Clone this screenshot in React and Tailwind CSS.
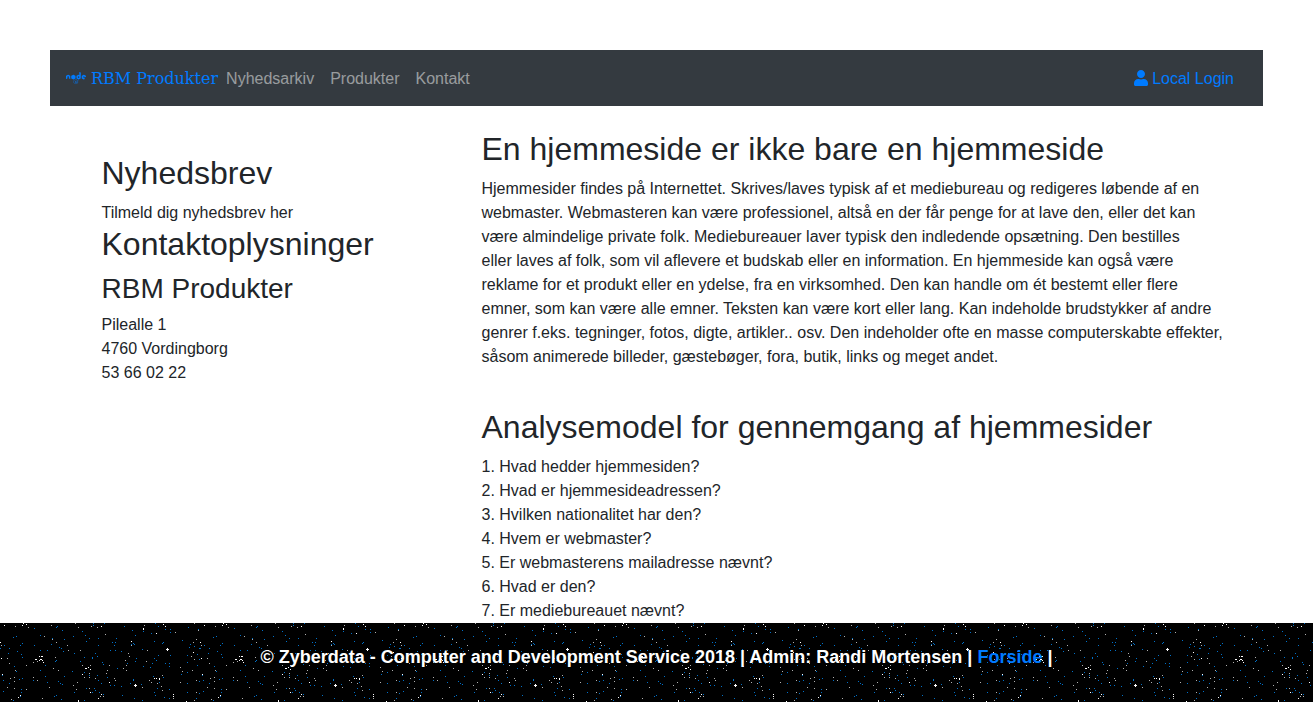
import React from "react";
import { FaNode, FaUser } from "react-icons/fa";

const questions = [
  "Hvad hedder hjemmesiden?",
  "Hvad er hjemmesideadressen?",
  "Hvilken nationalitet har den?",
  "Hvem er webmaster?",
  "Er webmasterens mailadresse nævnt?",
  "Hvad er den?",
  "Er mediebureauet nævnt?",
];

// Star positions inside one 200px wide tile of the night sky.
const white = [
  [22, 2], [23, 0], [26, 1], [4, 2], [0, 19], [1, 35], [39, 33], [41, 33], [42, 33], [35, 36], [36, 36],
  [39, 37], [40, 36], [41, 36], [42, 37], [43, 39], [2, 51], [20, 72], [18, 74], [101, 3], [131, 18],
  [85, 45], [86, 45], [88, 44], [90, 46], [82, 51], [109, 59], [90, 69], [101, 71], [98, 75], [78, 77],
  [78, 78], [143, 5], [143, 6], [156, 10], [165, 3], [163, 1], [154, 55], [156, 55], [159, 55], [159, 56],
  [193, 29], [173, 71], [173, 73], [186, 78], [166, 26],
  [167, 25], [167, 26], [167, 27], [168, 26], [134, 62], [135, 61], [135, 62], [135, 63], [136, 62],
];
const gray = [
  [15, 3], [28, 4], [44, 13], [1, 22], [7, 35], [9, 40], [15, 47], [10, 55], [14, 54], [14, 58], [7, 64],
  [14, 65], [26, 66], [11, 76], [26, 42], [33, 54], [33, 39], [37, 38], [37, 57], [51, 2], [56, 19],
  [52, 16], [67, 22], [55, 34], [53, 45], [58, 47], [49, 64], [42, 75], [68, 27], [78, 4], [97, 4],
  [75, 0], [91, 3], [105, 11], [131, 22], [80, 27], [90, 42], [82, 42], [84, 54], [89, 54], [95, 55],
  [89, 50], [109, 42], [107, 47], [106, 50], [114, 55], [115, 57], [125, 37], [128, 30],
  [123, 45], [126, 42], [73, 62], [77, 59], [76, 66], [89, 65], [100, 73], [103, 73], [126, 47],
  [129, 33], [144, 2], [175, 9], [198, 7], [196, 16], [193, 19], [194, 0], [147, 27], [146, 38],
  [180, 44], [182, 48], [192, 47], [162, 52], [149, 57], [151, 59], [157, 60], [180, 59], [161, 63],
  [162, 67], [142, 64], [196, 57], [191, 33], [194, 36], [196, 69], [194, 77], [173, 75],
];
const blue = [
  [13, 14], [16, 13], [34, 5], [22, 20], [20, 22], [0, 25], [9, 25], [4, 22], [17, 28], [21, 31],
  [22, 34], [8, 30], [14, 43], [16, 48], [2, 52], [3, 57], [9, 60], [19, 56], [22, 55], [3, 68],
  [21, 66], [21, 69], [20, 73], [13, 77], [40, 12], [57, 3], [56, 4], [62, 7], [64, 16], [52, 15],
  [34, 22], [40, 27], [47, 27], [51, 21], [59, 24], [61, 25], [63, 28], [56, 37], [55, 38], [40, 47],
  [45, 42], [45, 53], [33, 57], [64, 53], [58, 58], [60, 60], [62, 61], [47, 59], [54, 73], [56, 72],
  [61, 76], [93, 0], [93, 2], [104, 0], [82, 8], [85, 12], [73, 13], [86, 18], [89, 15], [98, 15],
  [98, 22], [116, 15], [112, 19], [115, 19], [114, 22], [110, 27], [115, 27], [124, 3], [132, 7],
  [135, 12], [133, 20], [131, 21], [134, 21], [121, 28], [74, 30], [84, 34], [92, 34], [92, 35],
  [95, 30], [97, 33], [80, 38], [102, 39], [103, 41], [72, 48], [89, 52], [84, 49], [97, 52], [98, 57],
  [101, 60], [107, 54], [110, 62], [114, 62], [121, 63], [133, 56], [133, 57], [130, 60], [86, 65],
  [74, 69], [94, 65], [95, 67], [92, 69], [99, 69], [103, 71], [122, 72], [134, 75], [84, 77],
  [135, 38], [136, 35], [127, 40], [117, 45], [155, 0], [143, 8], [158, 3], [165, 6], [170, 6],
  [170, 9], [151, 10], [154, 18], [163, 19], [162, 20], [182, 17], [189, 24], [190, 21], [170, 32],
  [142, 26], [158, 32], [154, 35], [156, 37], [152, 40], [143, 43], [150, 44], [165, 40], [169, 40],
  [169, 43], [153, 53], [163, 54], [159, 59], [181, 51], [187, 49], [157, 65], [154, 69], [155, 72],
  [164, 74], [169, 75], [142, 77], [187, 32], [187, 39], [197, 42], [199, 36], [198, 6],
  [188, 4], [187, 60], [187, 69], [199, 58], [199, 70],
  [169, 66], [141, 61], [194, 23], [199, 25], [197, 31], [196, 75],
];

const dots = (points) => points.map(([x, y]) => `M${x} ${y}h1v1h-1z`).join("");

function Stars() {
  return (
    <svg className="absolute inset-0 h-full w-full" shapeRendering="crispEdges" aria-hidden="true">
      <defs>
        <pattern id="sky" width="200" height="200" patternUnits="userSpaceOnUse">
          <path d="M0 0h200v200H0z" fill="#000" />
          <path d={dots(blue)} fill="#0070c8" />
          <path d={dots(gray)} fill="#b0b0b0" />
          <path d={dots(white)} fill="#fff" />
        </pattern>
      </defs>
      <rect width="100%" height="100%" fill="url(#sky)" />
    </svg>
  );
}

function Heading({ children }) {
  return <h2 className="mb-2 text-[32px] leading-[39px]">{children}</h2>;
}

export default function App() {
  return (
    <div className="font-[Arial,'Liberation_Sans',sans-serif] text-base text-[#212529]">
      <div className="px-[50px] pt-[50px]">
        <nav className="flex h-14 items-center bg-[#343a40] pr-[29px] pl-4">
          <a href="#" className="flex items-center gap-[5px] pr-2 font-['DejaVu_Serif',serif] text-[#007bff]">
            <FaNode className="h-4 w-5" aria-hidden="true" />
            <span className="pt-0.5">RBM Produkter</span>
          </a>
          <div className="flex flex-1 gap-4 pt-0.5 text-white/50">
            <a href="#nyhedsarkiv">Nyhedsarkiv</a>
            <a href="#produkter">Produkter</a>
            <a href="#kontakt">Kontakt</a>
          </div>
          <a href="#login" className="flex items-center gap-1 text-[#007bff]">
            <FaUser className="h-4 w-3.5" aria-hidden="true" />
            <span className="pt-0.5">Local Login</span>
          </a>
        </nav>
      </div>

      <main className="mx-auto flex max-w-[1140px] pt-6 pb-16">
        <aside className="w-1/3 px-[15px] pt-6">
          <Heading>Nyhedsbrev</Heading>
          <p>Tilmeld dig nyhedsbrev her</p>
          <Heading>Kontaktoplysninger</Heading>
          <h3 className="mb-2 text-[28px] leading-[33px]">RBM Produkter</h3>
          <address className="not-italic">
            Pilealle 1<br />
            4760 Vordingborg<br />
            53 66 02 22
          </address>
        </aside>
        <article className="w-2/3 px-[15px]">
          <Heading>En hjemmeside er ikke bare en hjemmeside</Heading>
          <p className="mb-[39px]">
            Hjemmesider findes på Internettet. Skrives/laves typisk af et mediebureau og redigeres løbende af en
            webmaster. Webmasteren kan være professionel, altså en der får penge for at lave den, eller det kan
            være almindelige private folk. Mediebureauer laver typisk den indledende opsætning. Den bestilles
            eller laves af folk, som vil aflevere et budskab eller en information. En hjemmeside kan også være
            reklame for et produkt eller en ydelse, fra en virksomhed. Den kan handle om ét bestemt eller flere
            emner, som kan være alle emner. Teksten kan være kort eller lang. Kan indeholde brudstykker af andre{" "}
            <span className="md:whitespace-nowrap">
              genrer f.eks. tegninger, fotos, digte, artikler.. osv. Den indeholder ofte en masse computerskabte
              effekter,
            </span>{" "}
            såsom animerede billeder, gæstebøger, fora, butik, links og meget andet.
          </p>
          <Heading>Analysemodel for gennemgang af hjemmesider</Heading>
          <ol>
            {questions.map((question, i) => (
              <li key={question}>
                {i + 1}. {question}
              </li>
            ))}
          </ol>
        </article>
      </main>

      <footer className="fixed inset-x-0 bottom-0 bg-black pt-[21px] pb-[31px] text-center text-lg leading-[27px] font-bold text-white">
        <Stars />
        <p className="relative">
          © Zyberdata - Computer and Development Service 2018 | Admin: Randi Mortensen |{" "}
          <a href="#forside" className="text-[#007bff]">Forside</a> |
        </p>
      </footer>
    </div>
  );
}
